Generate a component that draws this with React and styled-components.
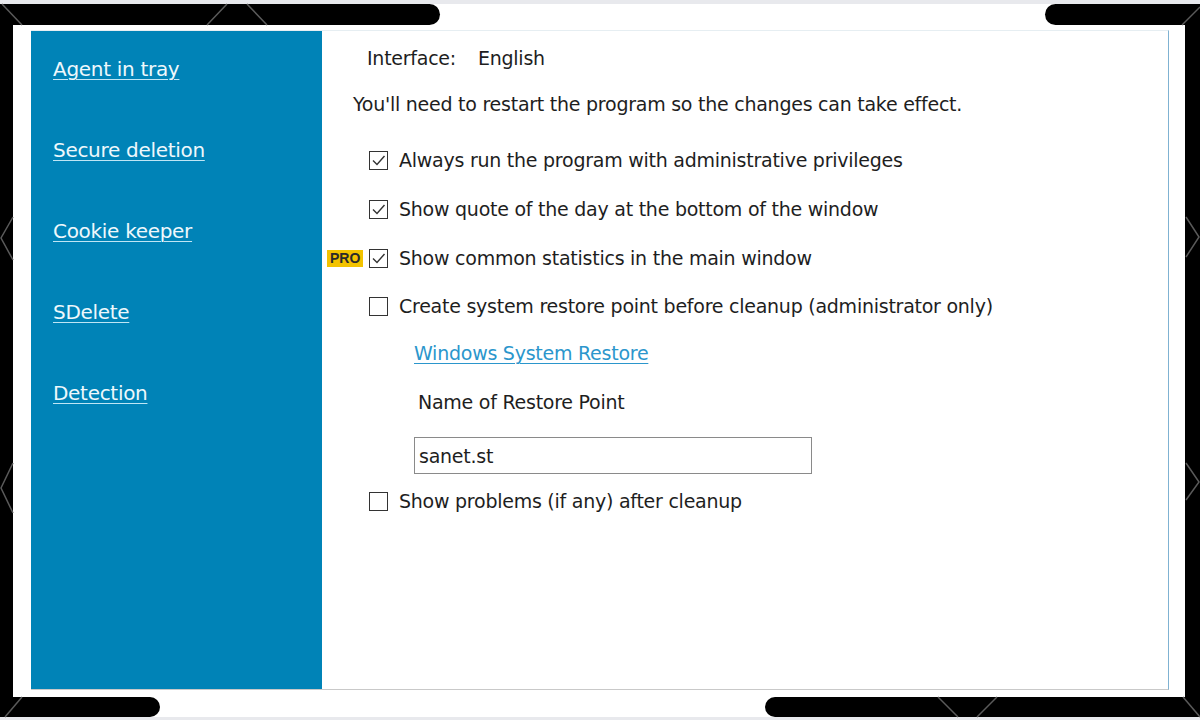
import React from "react";
import styled, { createGlobalStyle } from "styled-components";

const GlobalStyle = createGlobalStyle`
  html, body {
    margin: 0;
    padding: 0;
    background: #e8e9ed;
  }
  body {
    font-family: "DejaVu Sans", Verdana, sans-serif;
  }
`;

const Page = styled.div`
  position: relative;
  width: 1200px;
  height: 720px;
  padding: 4px 0 3px;
  box-sizing: border-box;
  display: grid;
  grid-template-rows: 21px 1fr 20px;
`;

const EdgeRow = styled.div`
  display: flex;
  justify-content: space-between;
  background: #fff;
`;

const Bar = styled.div`
  width: ${(p) => p.$w}px;
  background: #000;
  border-radius: ${(p) => (p.$side === "left" ? "0 11px 11px 0" : "11px 0 0 11px")};
`;

const Middle = styled.div`
  display: flex;
  border-left: 13px solid #000;
  border-right: 15px solid #000;
  background: #fff;
  padding: 5px 16px 7px 18px;
`;

const Window = styled.div`
  flex: 1;
  display: flex;
  border-top: 1px solid #e6eef2;
  border-right: 1px solid #7fb2d2;
  border-bottom: 1px solid #c9c9c9;
`;

const Sidebar = styled.nav`
  width: 291px;
  background: #0083b7;
  display: flex;
  flex-direction: column;
  gap: 56px;
  padding: 26px 0 0 22px;
  box-sizing: border-box;
`;

const SideLink = styled.a`
  color: #eef8fc;
  font-size: 20px;
  letter-spacing: -0.3px;
  line-height: 25px;
  text-decoration: underline;
  text-decoration-color: #bfe6f5;
  text-underline-offset: 3px;
  text-decoration-thickness: 1px;
`;

const Content = styled.div`
  flex: 1;
  display: flex;
  flex-direction: column;
  padding: 15px 0 0 31px;
  color: #1e1e1e;
  font-size: 19px;
  letter-spacing: -0.25px;
`;

const Line = styled.div`
  display: flex;
  align-items: center;
  height: 24px;
  margin-top: ${(p) => p.$mt || 0}px;
  padding-left: ${(p) => p.$indent || 0}px;
`;

const Label = styled.span`
  margin-right: 22px;
`;

const CheckRow = styled.div`
  display: flex;
  align-items: center;
  height: 24px;
  margin-top: ${(p) => p.$mt}px;
  padding-left: 16px;
  position: relative;
`;

const Box = styled.span`
  width: 19px;
  height: 19px;
  box-sizing: border-box;
  border: 1.5px solid #333;
  margin-right: 11px;
  display: flex;
  align-items: center;
  justify-content: center;
`;

const Pro = styled.span`
  position: absolute;
  left: -26px;
  top: 4px;
  background: #f3c300;
  color: #2a2a2a;
  font-family: "Liberation Sans", Arial, sans-serif;
  font-weight: bold;
  font-size: 14px;
  letter-spacing: 0;
  line-height: 17px;
  padding: 0 3px;
`;

const RestoreLink = styled.a`
  color: #2b96cc;
  text-decoration: underline;
  text-underline-offset: 3px;
  text-decoration-thickness: 1px;
`;

const NameInput = styled.div`
  margin: 23px 0 0 61px;
  width: 398px;
  height: 37px;
  box-sizing: border-box;
  border: 1.5px solid #8a8a8a;
  display: flex;
  align-items: center;
  padding-left: 4px;
`;

const Deco = styled.svg`
  position: absolute;
  inset: 0;
  pointer-events: none;
`;

const Check = () => (
  <svg width="15" height="13" viewBox="0 0 15 13">
    <path d="M2 6.5 L6 10.5 L13.5 2" fill="none" stroke="#333" strokeWidth="1.4" />
  </svg>
);

const CheckItem = ({ checked, pro, mt, children }) => (
  <CheckRow $mt={mt}>
    {pro && <Pro>PRO</Pro>}
    <Box>{checked && <Check />}</Box>
    <span>{children}</span>
  </CheckRow>
);

const links = ["Agent in tray", "Secure deletion", "Cookie keeper", "SDelete", "Detection"];

export default function App() {
  return (
    <>
      <GlobalStyle />
      <Page>
        <EdgeRow>
          <Bar $w={440} $side="left" />
          <Bar $w={155} $side="right" />
        </EdgeRow>
        <Middle>
          <Window>
            <Sidebar>
              {links.map((l) => (
                <SideLink key={l}>{l}</SideLink>
              ))}
            </Sidebar>
            <Content>
              <Line $indent={14}>
                <Label>Interface:</Label>
                <span>English</span>
              </Line>
              <Line $mt={22}>You'll need to restart the program so the changes can take effect.</Line>
              <CheckItem checked mt={32}>Always run the program with administrative privileges</CheckItem>
              <CheckItem checked mt={25}>Show quote of the day at the bottom of the window</CheckItem>
              <CheckItem checked pro mt={25}>Show common statistics in the main window</CheckItem>
              <CheckItem mt={24}>Create system restore point before cleanup (administrator only)</CheckItem>
              <Line $mt={23} $indent={61}>
                <RestoreLink>Windows System Restore</RestoreLink>
              </Line>
              <Line $mt={25} $indent={65}>Name of Restore Point</Line>
              <NameInput>sanet.st</NameInput>
              <CheckItem mt={15}>Show problems (if any) after cleanup</CheckItem>
            </Content>
          </Window>
        </Middle>
        <EdgeRow>
          <Bar $w={160} $side="left" />
          <Bar $w={435} $side="right" />
        </EdgeRow>
        <Deco width="1200" height="720">
          <g stroke="#5a5a5a" strokeWidth="1.5" fill="none">
            <path d="M2 4 L22 25" />
            <path d="M207 25 L227 4 M247 4 L267 25" />
            <path d="M1182 25 L1200 7" />
            <path d="M13 217 L1 238 L13 260" />
            <path d="M13 463 L1 488 L13 513" />
            <path d="M1186 217 L1199 237 L1186 257" />
            <path d="M1186 463 L1199 482 L1186 500" />
            <path d="M5 717 L22 697" />
            <path d="M938 697 L958 717 M997 697 L977 717" />
            <path d="M1183 697 L1200 717" />
          </g>
        </Deco>
      </Page>
    </>
  );
}
